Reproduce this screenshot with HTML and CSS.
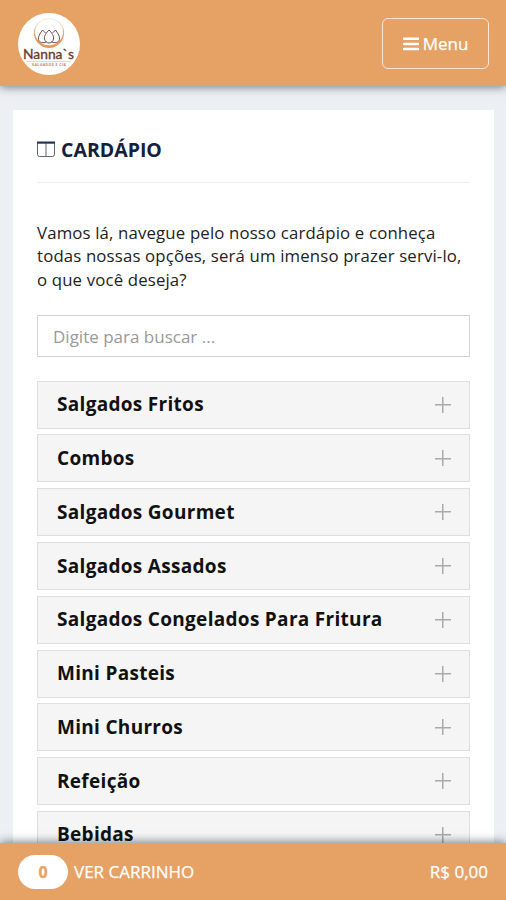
FILE: index.html
```html
<!DOCTYPE html>
<html lang="pt-br">
<head>
    <meta charset="utf-8">
    <meta name="viewport" content="width=device-width, initial-scale=1">
    <title>Nanna's - Cardápio</title>
    <link rel="stylesheet" href="styles.css">
</head>
<body>
    <header class="topo">
        <a href="#" class="logo">
            <svg width="62" height="62" viewBox="0 0 62 62">
                <circle cx="31" cy="31" r="31" fill="#fff"/>
                <circle cx="31" cy="20" r="14.500" fill="none" stroke="#f6d9c2" stroke-width=".7"/>
                <path d="M22 8A15 15 0 1 0 40 8A14.200 13.700 0 1 1 22 8z" fill="#e8995f"/>
                <g fill="none" stroke="#6b4a44" stroke-width="1">
                    <path d="M31 17c-3 3-5 6-4.500 9 .5 2.500 2.500 4 4.500 4s4-1.500 4.500-4c.5-3-1.500-6-4.500-9z"/>
                    <path d="M27.500 20l-3-3c-3 4-4.500 7-4 9.500.5 3 5 4 8 2.500M34.500 20l3-3c3 4 4.500 7 4 9.500-.5 3-5 4-8 2.500"/>
                </g>
                <text x="5" y="45.500" class="logo-nome" textLength="51" lengthAdjust="spacingAndGlyphs">Nanna`s</text>
                <path d="M9 48.500H53" stroke="#f2c8a8" stroke-width=".8"/>
                <text x="14" y="53" class="logo-sub" textLength="34">SALGADOS E CIA</text>
            </svg>
        </a>
        <button class="menu">
            <svg width="16" height="14" viewBox="0 0 16 14"><path d="M1 1.700H15M1 6.900H15M1 12.100H15" stroke="#fff" stroke-width="2.500" stroke-linecap="round"/></svg>
            <span>Menu</span>
        </button>
    </header>

    <main class="conteudo">
        <section class="card">
            <h1 class="titulo">
                <svg width="18" height="16" viewBox="0 0 18 16"><path d="M.5 2H17.500V13.500Q17.500 15.500 15.500 15.500H2.500Q.5 15.500 .5 13.500ZM9 2V15.500" fill="none" stroke="#5c6575"/><path d="M0 1.500H18" stroke="#24354f" stroke-width="2"/></svg>
                <span>CARDÁPIO</span>
            </h1>
            <p class="texto">Vamos lá, navegue pelo nosso cardápio e conheça<br>todas nossas opções, será um imenso prazer servi-lo,<br>o que você deseja?</p>
            <input type="text" class="busca" placeholder="Digite para buscar ...">
            <ul class="categorias">
                <li class="categoria">Salgados Fritos</li>
                <li class="categoria">Combos</li>
                <li class="categoria">Salgados Gourmet</li>
                <li class="categoria">Salgados Assados</li>
                <li class="categoria">Salgados Congelados Para Fritura</li>
                <li class="categoria">Mini Pasteis</li>
                <li class="categoria">Mini Churros</li>
                <li class="categoria">Refeição</li>
                <li class="categoria">Bebidas</li>
            </ul>
        </section>
    </main>

    <footer class="carrinho">
        <span class="qtd">0</span>
        <span class="ver">VER CARRINHO</span>
        <span class="total">R$ 0,00</span>
    </footer>
</body>
</html>
```
FILE: styles.css
```css
* {
    box-sizing: border-box;
}
body {
    margin: 0;
    height: 100vh;
    display: flex;
    flex-direction: column;
    overflow: hidden;
    background-color: #ecf0f4;
    font-family: "Open Sans", "Noto Sans", sans-serif;
    color: #222;
}
.topo {
    flex: none;
    z-index: 1;
    height: 86px;
    padding: 1px 17px 0 18px;
    display: flex;
    justify-content: space-between;
    align-items: center;
    background-color: #e6a164;
    box-shadow: 0 1px 9px rgba(0, 0, 0, 0.5);
}
.logo {
    display: block;
    height: 62px;
}
.logo-nome {
    font-family: "Lato", sans-serif;
    font-size: 12.500px;
    fill: #68382f;
    stroke: #68382f;
    stroke-width: 0.3px;
}
.logo-sub {
    font-size: 3.500px;
    font-weight: bold;
    fill: #b9826b;
}
.menu {
    width: 107px;
    height: 51px;
    padding: 0;
    display: flex;
    justify-content: center;
    align-items: center;
    gap: 4px;
    border: 1.500px solid #fbe5d3;
    border-radius: 6px;
    background: none;
    color: #fff;
    font-family: inherit;
    font-size: 17px;
    -webkit-text-stroke: 0.25px #fff;
}

/* Cardápio */
.conteudo {
    flex: 1;
    min-height: 0;
    padding: 24px 12px 0 13px;
    overflow: hidden;
}
.card {
    padding: 24px 24px;
    background-color: #fff;
}
.titulo {
    display: flex;
    align-items: center;
    gap: 6px;
    height: 49px;
    margin: 0;
    padding-bottom: 18px;
    border-bottom: 1px solid #eee;
    font-size: 19.500px;
    color: #14203c;
}
.texto {
    margin: 38px 0 24px;
    font-size: 16.800px;
    letter-spacing: 0.15px;
    line-height: 23.400px;
    white-space: nowrap;
}
.busca {
    display: block;
    width: 100%;
    height: 42px;
    padding: 0 15px;
    border: 1px solid #cfd3d6;
    font-family: inherit;
    font-size: 17px;
}
.busca::placeholder {
    color: #999;
}
.categorias {
    list-style: none;
    margin: 23.400px 0 0;
    padding: 0;
}
.categoria {
    display: flex;
    justify-content: space-between;
    align-items: center;
    height: 48px;
    margin-bottom: 5.800px;
    padding: 0 18px 1px 19px;
    border: 1px solid #dedede;
    background-color: #f5f5f5;
    font-size: 19px;
    letter-spacing: 0.3px;
    font-weight: bold;
    color: #111;
}
/* Sinal de mais */
.categoria::after {
    content: "";
    width: 16px;
    height: 16px;
    margin-top: 1px;
    background: linear-gradient(#aaa, #aaa) center / 16px 1.500px no-repeat,
                linear-gradient(#aaa, #aaa) center / 1.500px 16px no-repeat;
}

/* Carrinho */
.carrinho {
    flex: none;
    z-index: 1;
    display: flex;
    align-items: center;
    height: 57px;
    padding: 0 18px;
    background-color: #e6a164;
    box-shadow: 0 -1px 9px rgba(0, 0, 0, 0.5);
    color: #fff;
    font-size: 17px;
    -webkit-text-stroke: 0.25px;
}
.qtd {
    width: 50px;
    height: 34px;
    margin-right: 6px;
    border-radius: 17px;
    background-color: #fff;
    color: #e6a164;
    font-size: 16px;
    font-weight: bold;
    line-height: 34px;
    text-align: center;
}
.total {
    margin-left: auto;
}
```
